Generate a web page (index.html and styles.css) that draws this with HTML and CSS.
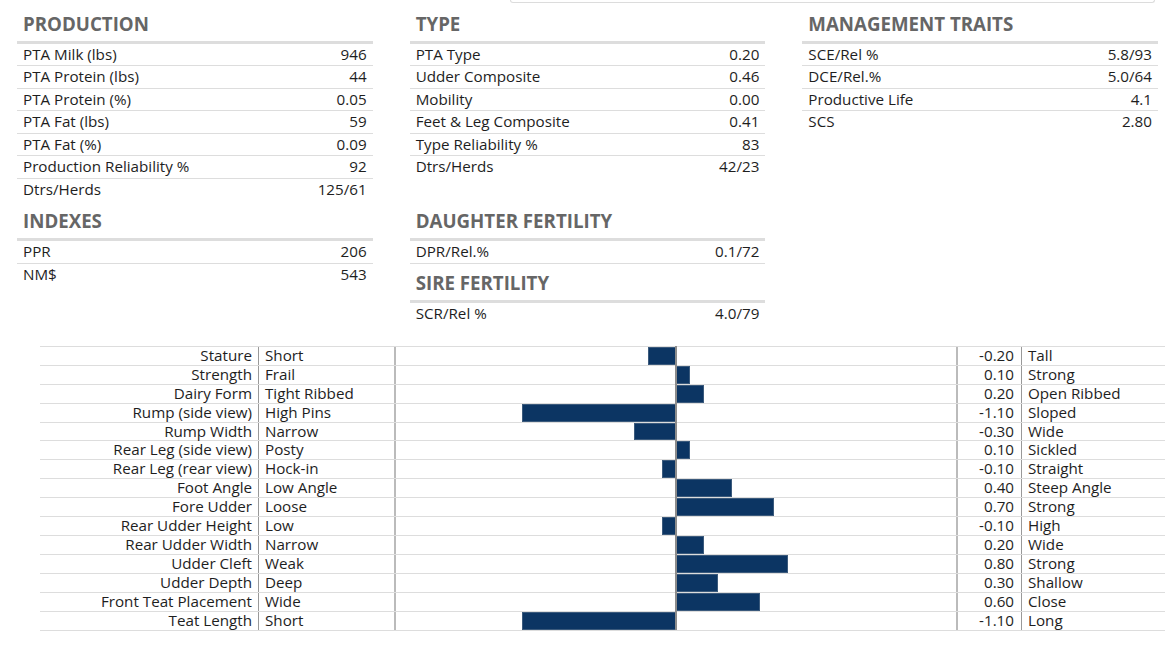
FILE: index.html
```html
<!DOCTYPE html>
<html>
<head>
<meta charset="utf-8">
<link rel="stylesheet" href="styles.css">
</head>
<body>
<div class="topbox"></div>
<div class="stats">
  <section class="block">
    <h2 class="head">PRODUCTION</h2>
    <div class="row"><span>PTA Milk (lbs)</span><span>946</span></div>
    <div class="row"><span>PTA Protein (lbs)</span><span>44</span></div>
    <div class="row"><span>PTA Protein (%)</span><span>0.05</span></div>
    <div class="row"><span>PTA Fat (lbs)</span><span>59</span></div>
    <div class="row"><span>PTA Fat (%)</span><span>0.09</span></div>
    <div class="row"><span>Production Reliability %</span><span>92</span></div>
    <div class="row"><span>Dtrs/Herds</span><span>125/61</span></div>
  </section>
  <section class="block">
    <h2 class="head">TYPE</h2>
    <div class="row"><span>PTA Type</span><span>0.20</span></div>
    <div class="row"><span>Udder Composite</span><span>0.46</span></div>
    <div class="row"><span>Mobility</span><span>0.00</span></div>
    <div class="row"><span>Feet &amp; Leg Composite</span><span>0.41</span></div>
    <div class="row"><span>Type Reliability %</span><span>83</span></div>
    <div class="row"><span>Dtrs/Herds</span><span>42/23</span></div>
  </section>
  <section class="block">
    <h2 class="head">MANAGEMENT TRAITS</h2>
    <div class="row"><span>SCE/Rel %</span><span>5.8/93</span></div>
    <div class="row"><span>DCE/Rel.%</span><span>5.0/64</span></div>
    <div class="row"><span>Productive Life</span><span>4.1</span></div>
    <div class="row"><span>SCS</span><span>2.80</span></div>
  </section>
  <section class="block">
    <h2 class="head">INDEXES</h2>
    <div class="row"><span>PPR</span><span>206</span></div>
    <div class="row"><span>NM$</span><span>543</span></div>
  </section>
  <section class="block">
    <h2 class="head">DAUGHTER FERTILITY</h2>
    <div class="row row-last"><span>DPR/Rel.%</span><span>0.1/72</span></div>
    <h2 class="head head-tight">SIRE FERTILITY</h2>
    <div class="row"><span>SCR/Rel %</span><span>4.0/79</span></div>
  </section>
  <section class="block"></section>
</div>

<div class="chart">
  <div class="crow"><div class="lab">Stature</div><div class="lo">Short</div><div class="barcell"><div class="bar" style="left:45%;width:5%"></div></div><div class="val">-0.20</div><div class="hi">Tall</div></div>
  <div class="crow"><div class="lab">Strength</div><div class="lo">Frail</div><div class="barcell"><div class="bar" style="left:50%;width:2.5%"></div></div><div class="val">0.10</div><div class="hi">Strong</div></div>
  <div class="crow"><div class="lab">Dairy Form</div><div class="lo">Tight Ribbed</div><div class="barcell"><div class="bar" style="left:50%;width:5%"></div></div><div class="val">0.20</div><div class="hi">Open Ribbed</div></div>
  <div class="crow"><div class="lab">Rump (side view)</div><div class="lo">High Pins</div><div class="barcell"><div class="bar" style="left:22.5%;width:27.5%"></div></div><div class="val">-1.10</div><div class="hi">Sloped</div></div>
  <div class="crow"><div class="lab">Rump Width</div><div class="lo">Narrow</div><div class="barcell"><div class="bar" style="left:42.5%;width:7.5%"></div></div><div class="val">-0.30</div><div class="hi">Wide</div></div>
  <div class="crow"><div class="lab">Rear Leg (side view)</div><div class="lo">Posty</div><div class="barcell"><div class="bar" style="left:50%;width:2.5%"></div></div><div class="val">0.10</div><div class="hi">Sickled</div></div>
  <div class="crow"><div class="lab">Rear Leg (rear view)</div><div class="lo">Hock-in</div><div class="barcell"><div class="bar" style="left:47.5%;width:2.5%"></div></div><div class="val">-0.10</div><div class="hi">Straight</div></div>
  <div class="crow"><div class="lab">Foot Angle</div><div class="lo">Low Angle</div><div class="barcell"><div class="bar" style="left:50%;width:10%"></div></div><div class="val">0.40</div><div class="hi">Steep Angle</div></div>
  <div class="crow"><div class="lab">Fore Udder</div><div class="lo">Loose</div><div class="barcell"><div class="bar" style="left:50%;width:17.5%"></div></div><div class="val">0.70</div><div class="hi">Strong</div></div>
  <div class="crow"><div class="lab">Rear Udder Height</div><div class="lo">Low</div><div class="barcell"><div class="bar" style="left:47.5%;width:2.5%"></div></div><div class="val">-0.10</div><div class="hi">High</div></div>
  <div class="crow"><div class="lab">Rear Udder Width</div><div class="lo">Narrow</div><div class="barcell"><div class="bar" style="left:50%;width:5%"></div></div><div class="val">0.20</div><div class="hi">Wide</div></div>
  <div class="crow"><div class="lab">Udder Cleft</div><div class="lo">Weak</div><div class="barcell"><div class="bar" style="left:50%;width:20%"></div></div><div class="val">0.80</div><div class="hi">Strong</div></div>
  <div class="crow"><div class="lab">Udder Depth</div><div class="lo">Deep</div><div class="barcell"><div class="bar" style="left:50%;width:7.5%"></div></div><div class="val">0.30</div><div class="hi">Shallow</div></div>
  <div class="crow"><div class="lab">Front Teat Placement</div><div class="lo">Wide</div><div class="barcell"><div class="bar" style="left:50%;width:15%"></div></div><div class="val">0.60</div><div class="hi">Close</div></div>
  <div class="crow"><div class="lab">Teat Length</div><div class="lo">Short</div><div class="barcell"><div class="bar" style="left:22.5%;width:27.5%"></div></div><div class="val">-1.10</div><div class="hi">Long</div></div>
</div>
</body>
</html>
```

FILE: styles.css
```css
* { box-sizing: border-box; }
html, body { margin: 0; padding: 0; background: #fff; }
body {
  font-family: "Open Sans", "Liberation Sans", sans-serif;
  font-size: 15.2px;
  color: #1e1e1e;
  width: 1176px;
  height: 653px;
  overflow: hidden;
}
.topbox {
  margin-left: 510px;
  width: 645px;
  height: 3px;
  border: 1px solid #dcdcdc;
  border-top: none;
  border-radius: 0 0 5px 5px;
}
.stats {
  display: grid;
  grid-template-columns: repeat(3, 1fr);
  column-gap: 37px;
  padding: 0 18px 0 17px;
}
.head {
  margin: 9px 0 0;
  padding: 0 6px 5px;
  font-size: 18.7px;
  line-height: 24px;
  font-weight: 700;
  color: #666;
  border-bottom: 2px solid #ddd;
}
.head-tight { margin-top: 7px; }
.row {
  display: flex;
  justify-content: space-between;
  padding: 0 6px;
  line-height: 21.43px;
  border-top: 1px solid #ddd;
}
.row-last { border-bottom: 1px solid #ddd; }
.chart {
  margin: 22px 11px 0 40px;
  border-bottom: 1px solid #ddd;
}
.crow {
  display: grid;
  grid-template-columns: 219px 137px 562px 64px 1fr;
  border-top: 1px solid #ddd;
  line-height: 17.9px;
  white-space: nowrap;
}
.lab { text-align: right; padding-right: 6px; border-right: 1px solid #999; }
.lo { padding-left: 6px; border-right: 2px solid #bbb; }
.barcell { position: relative; border-right: 2px solid #bbb; }
.barcell::after {
  content: "";
  position: absolute;
  left: 50%;
  margin-left: -1px;
  top: -1px;
  bottom: 0;
  width: 2px;
  background: #8c8c8c;
  z-index: 2;
}
.bar {
  position: absolute;
  top: 0;
  bottom: 0;
  background: #0c3563;
  border: 1px solid #3b5a7c;
}
.val { text-align: right; padding-right: 7px; border-right: 1px solid #999; }
.hi { padding-left: 6px; }
```
